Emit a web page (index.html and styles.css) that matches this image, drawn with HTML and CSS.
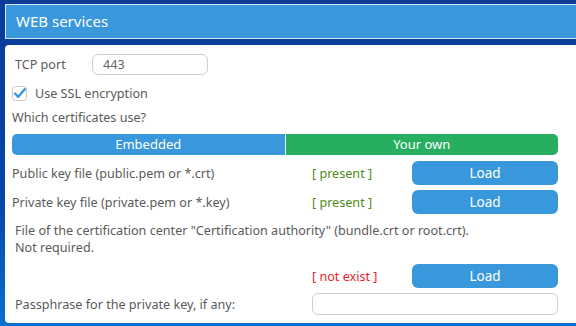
FILE: index.html
```html
<!DOCTYPE html>
<html lang="en">
<head>
    <meta charset="UTF-8">
    <title>WEB services</title>
    <link rel="stylesheet" href="styles.css">
</head>
<body>
    <div class="header">WEB services</div>

    <div class="panel">
        <div class="port-row">
            <span class="label">TCP port</span>
            <input class="text-input port-input" type="text" value="443">
        </div>

        <label class="check-row">
            <svg class="check-box" width="15" height="15" viewBox="0 0 15 15">
                <rect x="0.5" y="0.5" width="14" height="14" rx="3" fill="#fff" stroke="#c8c8c8"/>
                <path d="M3 7.5 L6.2 10.8 L12.8 3.2" fill="none" stroke="#3898db" stroke-width="2.4" stroke-linecap="round" stroke-linejoin="round"/>
            </svg>
            Use SSL encryption
        </label>

        <div class="question">Which certificates use?</div>

        <div class="switch">
            <div class="switch-item embedded">Embedded</div>
            <div class="switch-item own">Your own</div>
        </div>

        <div class="file-row">
            <span>Public key file (public.pem or *.crt)</span>
            <span class="status ok">[ present ]</span>
            <button class="load-btn">Load</button>
        </div>
        <div class="file-row">
            <span>Private key file (private.pem or *.key)</span>
            <span class="status ok">[ present ]</span>
            <button class="load-btn">Load</button>
        </div>

        <div class="ca-text">
            File of the certification center "Certification authority" (bundle.crt or root.crt).<br>
            Not required.
        </div>
        <div class="file-row ca-row">
            <span></span>
            <span class="status missing">[ not exist ]</span>
            <button class="load-btn">Load</button>
        </div>

        <div class="pass-row">
            <span class="label">Passphrase for the private key, if any:</span>
            <input class="text-input pass-input" type="password">
        </div>
    </div>
</body>
</html>
```

FILE: styles.css
```css
body {
    margin: 0;
    padding: 4px 0 0 5px;
    height: 326px;
    box-sizing: border-box;
    overflow: hidden;
    font-family: 'Noto Sans', sans-serif;
    font-size: 12.6px;
    color: #5a5a5a;
    background: linear-gradient(to bottom, #0a3c98 0%, #0745a6 60%, #0a6fd0 100%);
}

.header {
    height: 33px;
    line-height: 33px;
    background-color: #3898db;
    border-top: 1px solid #d8e6f4;
    border-bottom: 1px solid #d8e6f4;
    border-left: 1px solid #d8e6f4;
    color: #fff;
    font-size: 15px;
    padding-left: 10px;
}

.panel {
    margin-top: 6px;
    background-color: #fff;
    border-radius: 4px 0 0 4px;
    padding: 8px 18px 7px 7px;
    height: 278px;
    box-sizing: border-box;
}

.port-row {
    display: flex;
    align-items: center;
    padding-left: 3px;
    height: 22px;
    line-height: 22px;
}

.port-row .label {
    width: 77px;
    padding-top: 2px;
}

.text-input {
    border: 1px solid #cfcfcf;
    border-radius: 6px;
    font-family: inherit;
    font-size: 12.6px;
    color: #666;
    box-sizing: border-box;
    outline: none;
}

.port-input {
    width: 116px;
    height: 21px;
    padding: 0 10px;
}

.check-row {
    display: flex;
    align-items: center;
    gap: 8px;
    margin-top: 10px;
    height: 16px;
}

.question {
    margin-top: 9px;
    height: 16px;
    line-height: 16px;
}

.switch {
    display: flex;
    margin-top: 8px;
    height: 21px;
    gap: 1px;
    color: #fff;
    font-size: 13px;
}

.switch-item {
    flex: 1;
    text-align: center;
    line-height: 21px;
}

.embedded {
    background-color: #3898db;
    border-radius: 5px 0 0 5px;
}

.own {
    background-color: #27ae60;
    border-radius: 0 5px 5px 0;
}

.file-row {
    display: grid;
    grid-template-columns: 1fr 100px 146px;
    align-items: center;
    margin-top: 6px;
}

.file-row + .file-row {
    margin-top: 5px;
}

.status.ok {
    color: #4f8a1a;
}

.status.missing {
    color: #ee1c2a;
}

.load-btn {
    height: 24px;
    border: none;
    border-radius: 6px;
    background-color: #3898db;
    color: #fff;
    font-family: inherit;
    font-size: 13.5px;
    padding: 0;
}

.ca-text {
    margin-top: 8px;
    padding-left: 3px;
    line-height: 17px;
}

.ca-row {
    margin-top: 8px;
}

.pass-row {
    display: grid;
    grid-template-columns: 1fr 246px;
    align-items: center;
    padding-left: 3px;
    margin-top: 5px;
}

.pass-input {
    height: 22px;
}
```
